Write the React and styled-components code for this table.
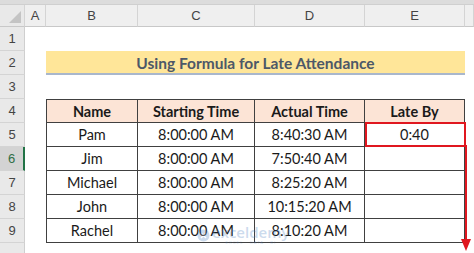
import React from "react";
import styled, { createGlobalStyle } from "styled-components";

const GlobalStyle = createGlobalStyle`
  html, body {
    margin: 0;
    padding: 0;
    background: #ffffff;
  }
  body {
    font-family: Lato, "Open Sans", sans-serif;
  }
`;

const COLS = ["A", "B", "C", "D", "E", ""];
const COL_WIDTHS = "25px 21px 92px 117px 110px 100px 9px";

const rows = [
  { name: "Pam", start: "8:00:00 AM", actual: "8:40:30 AM", late: "0:40" },
  { name: "Jim", start: "8:00:00 AM", actual: "7:50:40 AM", late: "" },
  { name: "Michael", start: "8:00:00 AM", actual: "8:25:20 AM", late: "" },
  { name: "John", start: "8:00:00 AM", actual: "10:15:20 AM", late: "" },
  { name: "Rachel", start: "8:00:00 AM", actual: "8:10:20 AM", late: "" },
];

const Page = styled.div`
  position: relative;
  width: 474px;
  height: 253px;
  overflow: hidden;
  background: #ffffff;
`;

const TopStrip = styled.div`
  height: 4px;
  background: #dcdcdc;
  border-bottom: 1px solid #cfcfcf;
`;

const Sheet = styled.div`
  display: grid;
  grid-template-columns: ${COL_WIDTHS};
  grid-template-rows: 22px repeat(9, 24px) 24px;
`;

const Corner = styled.div`
  background: #e9e9e9;
  border-right: 1px solid #d4d4d4;
  border-bottom: 1px solid #c8c8c8;
  position: relative;
  &::after {
    content: "";
    position: absolute;
    right: 3px;
    bottom: 3px;
    border-style: solid;
    border-width: 0 0 12px 12px;
    border-color: transparent transparent #c4c4c4 transparent;
  }
`;

const ColHead = styled.div`
  box-sizing: border-box;
  background: #efefef;
  border-right: 1px solid #d4d4d4;
  border-bottom: 1px solid #c8c8c8;
  display: flex;
  align-items: center;
  justify-content: center;
  font-family: "Liberation Sans", Arial, sans-serif;
  font-size: 13px;
  color: #444444;
`;

const RowHead = styled.div`
  box-sizing: border-box;
  background: ${({ $active }) => ($active ? "#d3d3d3" : "#e9e9e9")};
  border-bottom: 1px solid #d4d4d4;
  border-right: ${({ $active }) => ($active ? "2px solid #217346" : "1px solid #cfcfcf")};
  display: flex;
  align-items: center;
  justify-content: center;
  font-family: "Liberation Sans", Arial, sans-serif;
  font-size: 13px;
  color: ${({ $active }) => ($active ? "#2f6e46" : "#444444")};
`;

const Blank = styled.div`
  background: #ffffff;
`;

const Title = styled.div`
  grid-column: 3 / 7;
  box-sizing: border-box;
  background: #ffe699;
  border-bottom: 2px solid #a9b7cc;
  display: flex;
  align-items: center;
  justify-content: center;
  font-size: 15.5px;
  font-weight: 700;
  color: #4d5868;
  padding-top: 1px;
`;

const Cell = styled.div`
  box-sizing: border-box;
  position: relative;
  background: ${({ $head }) => ($head ? "#fce4d6" : "#ffffff")};
  border-right: 1px solid #404040;
  border-bottom: 1px solid #404040;
  border-left: ${({ $first }) => ($first ? "1px solid #404040" : "none")};
  border-top: ${({ $top }) => ($top ? "1px solid #404040" : "none")};
  display: flex;
  align-items: center;
  justify-content: center;
  font-size: 14.5px;
  font-weight: ${({ $head }) => ($head ? 700 : 400)};
  color: #1a1a1a;
`;

const Highlight = styled.div`
  position: absolute;
  inset: -1px -2px -1px 0;
  border: 2px solid #e0171f;
  pointer-events: none;
`;

const Arrow = styled.svg`
  position: absolute;
  left: 459px;
  top: 145px;
  pointer-events: none;
`;

const Watermark = styled.div`
  position: absolute;
  left: 197px;
  top: 225px;
  display: flex;
  align-items: center;
  gap: 2px;
  opacity: 0.28;
  pointer-events: none;
`;

const MarkText = styled.div`
  display: flex;
  flex-direction: column;
  align-items: center;
  line-height: 1;
  color: #4a7fc1;
`;

const MarkName = styled.span`
  font-family: "Open Sans", sans-serif;
  font-size: 15px;
  font-weight: 600;
`;

const MarkSub = styled.span`
  font-family: "Liberation Sans", sans-serif;
  font-size: 4px;
  letter-spacing: 1px;
  margin-top: 1px;
`;

const App = () => {
  const renderRowHead = (n) => (
    <RowHead key={`r${n}`} $active={n === 6}>
      {n}
    </RowHead>
  );

  const emptyRow = (n) => [
    renderRowHead(n),
    <Blank key={`a${n}`} />,
    <Blank key={`b${n}`} />,
    <Blank key={`c${n}`} />,
    <Blank key={`d${n}`} />,
    <Blank key={`e${n}`} />,
    <Blank key={`f${n}`} />,
  ];

  return (
    <Page>
      <GlobalStyle />
      <TopStrip />
      <Sheet>
        <Corner />
        {COLS.map((c, i) => (
          <ColHead key={`h${i}`}>{c}</ColHead>
        ))}

        {emptyRow(1)}

        {renderRowHead(2)}
        <Blank />
        <Title>Using Formula for Late Attendance</Title>
        <Blank />

        {emptyRow(3)}

        {renderRowHead(4)}
        <Blank />
        <Cell $head $top $first>Name</Cell>
        <Cell $head $top>Starting Time</Cell>
        <Cell $head $top>Actual Time</Cell>
        <Cell $head $top>Late By</Cell>
        <Blank />

        {rows.map((r, i) => (
          <React.Fragment key={r.name}>
            {renderRowHead(i + 5)}
            <Blank />
            <Cell $first>{r.name}</Cell>
            <Cell>{r.start}</Cell>
            <Cell>{r.actual}</Cell>
            <Cell>
              {r.late}
              {i === 0 && <Highlight />}
            </Cell>
            <Blank />
          </React.Fragment>
        ))}

        {emptyRow(10).map((el, i) => (i === 0 ? <RowHead key="r10" /> : el))}
      </Sheet>

      <Arrow width="14" height="108" viewBox="0 0 14 108">
        <line x1="7" y1="0" x2="7" y2="96" stroke="#e0171f" strokeWidth="2" />
        <polygon points="2,94 12,94 7,106" fill="#e0171f" />
      </Arrow>

      <Watermark>
        <svg width="13" height="13" viewBox="0 0 13 13">
          <circle cx="6.5" cy="6.5" r="6" fill="#4a7fc1" />
          <path d="M4 4 L9 9 M9 4 L4 9" stroke="#ffffff" strokeWidth="1.6" />
        </svg>
        <MarkText>
          <MarkName>exceldemy</MarkName>
          <MarkSub>EXCEL · DATA · BI</MarkSub>
        </MarkText>
      </Watermark>
    </Page>
  );
};

export default App;
